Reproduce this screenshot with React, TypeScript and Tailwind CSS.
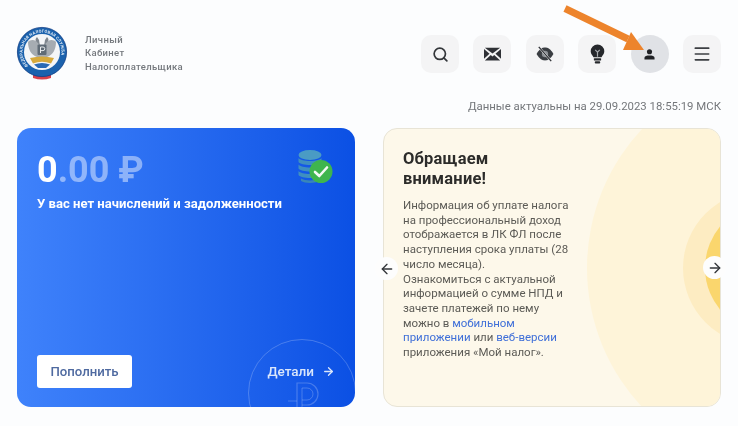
import { ArrowLeft, ArrowRight, Menu, Search } from "lucide-react";
import type { ReactNode } from "react";

function Logo() {
  return (
    <svg viewBox="0 -1 52 54" className="h-[54px] w-[52px] shrink-0">
      <defs>
        <path id="logo-ring" d="M 12.2 38.8 A 19.5 19.5 0 1 1 39.8 38.8" />
      </defs>
      <path d="M17 46 h18 v5 q-9 3 -18 0z" fill="#d8414a" />
      <path d="M17 45 h18 v3 q-9 2 -18 0z" fill="#3a5fb5" />
      <circle cx="26" cy="25" r="24.6" fill="#1b62ad" stroke="#123f86" strokeWidth="0.8" />
      <circle cx="26" cy="25" r="18" fill="#f4f6f8" />
      <text fontSize="4.1" fontWeight="700" fill="#dfeaf6" fontFamily="Roboto, sans-serif" letterSpacing="0.2">
        <textPath href="#logo-ring">ФЕДЕРАЛЬНАЯ НАЛОГОВАЯ СЛУЖБА</textPath>
      </text>
      <path d="M21 10 c-2 2 -2 4 0 6 l2 3 h1 l-1 -6z M31 10 c2 2 2 4 0 6 l-2 3 h-1 l1 -6z" fill="#7f868e" />
      <path d="M24 19 C20 12 15 12 12 15 C12 22 15 28 21 30 L31 30 C37 28 40 22 40 15 C37 12 32 12 28 19z" fill="#a6acb2" />
      <rect x="21.5" y="17.5" width="9" height="10.5" rx="1" fill="#5f6b76" />
      <path d="M24.5 26 V20 h2.5 a1.8 1.8 0 0 1 0 3.6 h-2.5" stroke="#f4f6f8" strokeWidth="0.9" fill="none" />
      <path d="M14 31 Q26 28 38 31 L35 36.5 Q26 33 17 36.5z" fill="#d6a93c" />
      <path d="M18 37.5 Q26 34.5 34 37.5 L30 41 H22z" fill="#2a6ab5" />
    </svg>
  );
}

function MailIcon() {
  return (
    <svg viewBox="0 0 20 16" className="h-[14px] w-[17px]" fill="#2f3136">
      <path d="M1 0.5 H19 L10 7.5z" />
      <path d="M0 2 L6.5 7.8 L0 13.5z" />
      <path d="M20 2 L13.5 7.8 L20 13.5z" />
      <path d="M1 15.5 L8 9.2 L10 10.8 L12 9.2 L19 15.5z" />
    </svg>
  );
}

function EyeOffIcon() {
  return (
    <svg viewBox="0 0 20 18" className="h-[16px] w-[18px]">
      <path d="M0.5 9 C4 3 7 1.8 10 1.8 C13 1.8 16 3 19.5 9 C16 15 13 16.2 10 16.2 C7 16.2 4 15 0.5 9z" fill="#3a3d42" />
      <circle cx="10" cy="9" r="3.6" fill="#8b8f94" />
      <path d="M3.5 1.5 L16.5 16.5" stroke="#f5f5f6" strokeWidth="2.4" />
      <path d="M3 1 L17 17" stroke="#2f3136" strokeWidth="1.5" />
    </svg>
  );
}

function BulbIcon() {
  return (
    <svg viewBox="0 0 16 22" className="h-[20px] w-[15px]">
      <path d="M8 0.5 A7.5 7.5 0 0 1 15.5 8 C15.5 11 13.6 12.5 12.4 14.5 H3.6 C2.4 12.5 0.5 11 0.5 8 A7.5 7.5 0 0 1 8 0.5z" fill="#26282c" />
      <path d="M8 14 V8.5 M5.5 6.5 L8 9 L10.5 6.5" stroke="#a8abaf" strokeWidth="1.3" fill="none" />
      <rect x="4" y="15.6" width="8" height="2.6" rx="0.6" fill="#26282c" />
      <rect x="5" y="19" width="6" height="2.4" rx="1" fill="#26282c" />
    </svg>
  );
}

function UserIcon() {
  return (
    <svg viewBox="0 0 12 12" className="h-[11px] w-[11px]" fill="#1f2125">
      <circle cx="6" cy="3" r="2.8" />
      <path d="M0.5 11.5 V9.6 C0.5 7.9 3 7.2 6 7.2 C9 7.2 11.5 7.9 11.5 9.6 V11.5z" />
    </svg>
  );
}

function CoinsIcon() {
  return (
    <svg viewBox="0 0 36 36" className="mt-[1px] mr-[2px] h-[36px] w-[36px]">
      <ellipse cx="13" cy="6" rx="11.5" ry="5" fill="#4a9bc4" />
      <path d="M1.5 9 C4 13 22 13 24.5 9 V13 C22 17 4 17 1.5 13z" fill="#3f8fc0" />
      <path d="M1.5 15.5 C4 19.5 22 19.5 24.5 15.5 V19.5 C22 23.5 4 23.5 1.5 19.5z" fill="#3f8fc0" />
      <path d="M1.5 22 C4 26 22 26 24.5 22 V26 C22 30 4 30 1.5 26z" fill="#3f8fc0" />
      <path d="M4 29.5 C8 32 18 32 22 29.5 V32 C18 34.5 8 34.5 4 32z" fill="#3a86b8" />
      <circle cx="24" cy="22.5" r="11.5" fill="#3fb54d" />
      <path d="M18 23 L22.3 27 L30 18.5" stroke="#f4f8f4" strokeWidth="2.6" fill="none" strokeLinecap="round" strokeLinejoin="round" />
    </svg>
  );
}

function IconButton({ children, active }: { children: ReactNode; active?: boolean }) {
  return (
    <button
      className={
        active
          ? "flex h-[38px] w-[38px] items-center justify-center rounded-full bg-[#e0e2e6]"
          : "flex h-[38px] w-[38px] items-center justify-center rounded-[10px] bg-[#f4f4f5]"
      }
    >
      {children}
    </button>
  );
}

function CarouselButton({ children, side }: { children: ReactNode; side: "left" | "right" }) {
  return (
    <button
      className={
        side === "left"
          ? "absolute top-[129px] left-[-8px] flex h-[23px] w-[23px] items-center justify-center rounded-full bg-[#fdfdfd]"
          : "absolute top-[128px] right-[-5px] flex h-[23px] w-[23px] items-center justify-center rounded-full bg-[#fdfdfd]"
      }
    >
      {children}
    </button>
  );
}

export default function App() {
  return (
    <div className="relative h-[426px] w-[738px] overflow-hidden bg-[#fcfdfe] font-['Roboto',sans-serif] blur-[0.5px]">
      {/* HEADER */}
      <header className="flex items-start justify-between pt-[26px] pr-[17px] pl-[16px]">
        <div className="flex items-center gap-[17px]">
          <Logo />
          <div className="text-[9.5px] leading-[13.5px] font-medium tracking-[0.35px] text-[#74787d]">
            <div>Личный</div>
            <div>Кабинет</div>
            <div>Налогоплательщика</div>
          </div>
        </div>

        <div className="mt-[9px] flex gap-[14.4px]">
          <IconButton>
            <Search size={17} strokeWidth={2.4} color="#33363a" />
          </IconButton>
          <IconButton>
            <MailIcon />
          </IconButton>
          <IconButton>
            <EyeOffIcon />
          </IconButton>
          <IconButton>
            <BulbIcon />
          </IconButton>
          <IconButton active>
            <UserIcon />
          </IconButton>
          <IconButton>
            <Menu size={20} strokeWidth={2} color="#3c3f43" />
          </IconButton>
        </div>
      </header>

      <p className="mt-[19px] pr-[17px] text-right text-[11.4px] leading-[14px] text-[#74777b]">
        Данные актуальны на 29.09.2023 18:55:19 МСК
      </p>

      {/* CARDS */}
      <main className="mt-[15px] grid grid-cols-2 gap-7 px-[17px]">
        <section className="relative flex h-[279px] flex-col justify-between overflow-hidden rounded-[14px] bg-gradient-to-r from-[#3f82fb] to-[#0b50e4] px-5 pt-[20px] pb-[19px]">
          <div>
            <div className="flex items-start justify-between">
              <div className="text-[36px] leading-[44px] font-bold text-white/45">
                <span className="text-white">0</span>.00 ₽
              </div>
              <CoinsIcon />
            </div>
            <p className="mt-[4px] text-[13.1px] leading-[16px] font-bold text-white">
              У вас нет начислений и задолженности
            </p>
          </div>

          <div className="relative flex items-center justify-between">
            <button className="h-[33px] w-[95px] rounded-[3px] bg-white text-[13.2px] font-medium text-[#4f6aa0]">
              Пополнить
            </button>
            <span className="-ml-px flex items-center gap-[8px] text-[13.5px] font-medium text-[#dbe7fb]">
              Детали
              <ArrowRight size={13} strokeWidth={2.4} />
            </span>
          </div>

          <svg viewBox="0 0 110 70" className="absolute right-[-2px] bottom-0 h-[70px] w-[110px]" fill="none" stroke="#ffffff" strokeOpacity="0.22">
            <circle cx="55" cy="56" r="53.5" />
            <path d="M50 70 V46 H60 A11 11 0 0 1 60 68 H55" strokeWidth="1.2" />
            <path d="M55 70 V51 H60 A6 6 0 0 1 60 63 H55" />
            <path d="M41 64 H50" strokeWidth="1.2" />
          </svg>
        </section>

        <section className="relative h-[279px]">
          <div className="relative h-full overflow-hidden rounded-[14px] border border-[#e8e4d6] bg-[#fdf8ea] pt-[20px] pl-[19px]">
            <div className="absolute top-[-64px] left-[203px] h-[406px] w-[406px] rounded-full bg-[#fef4d9]" />
            <div className="absolute top-[62px] left-[299px] h-[154px] w-[154px] rounded-full bg-[#fdecc2]" />
            <div className="absolute top-[74px] left-[321px] h-[130px] w-[130px] rounded-full bg-[#fad66d]" />

            <div className="relative w-[170px]">
              <h2 className="text-[16.5px] leading-[20px] font-bold tracking-[0.2px] text-[#2c2c2a]">
                Обращаем
                <br />
                внимание!
              </h2>
              <p className="mt-[9px] text-[11.5px] leading-[14.7px] text-[#5c5b56]">
                Информация об уплате налога на профессиональный доход отображается в ЛК ФЛ после наступления срока уплаты (28 число месяца).
                <br />
                Ознакомиться с актуальной информацией о сумме НПД и зачете платежей по нему можно в{" "}
                <a className="text-[#3f6fd8]">мобильном приложении</a> или <a className="text-[#3f6fd8]">веб-версии</a> приложения «Мой налог».
              </p>
            </div>
          </div>

          <CarouselButton side="left">
            <ArrowLeft size={16} strokeWidth={2} color="#33363a" />
          </CarouselButton>
          <CarouselButton side="right">
            <ArrowRight size={16} strokeWidth={2} color="#33363a" />
          </CarouselButton>
        </section>
      </main>

      {/* annotation arrow */}
      <svg viewBox="0 0 90 50" className="absolute top-[2px] left-[562px] h-[50px] w-[90px]">
        <path d="M3 6.5 L66 37" stroke="#ed842c" strokeWidth="7" />
        <path d="M82 48 L61 48 L69 30z" fill="#ed842c" />
      </svg>
    </div>
  );
}
